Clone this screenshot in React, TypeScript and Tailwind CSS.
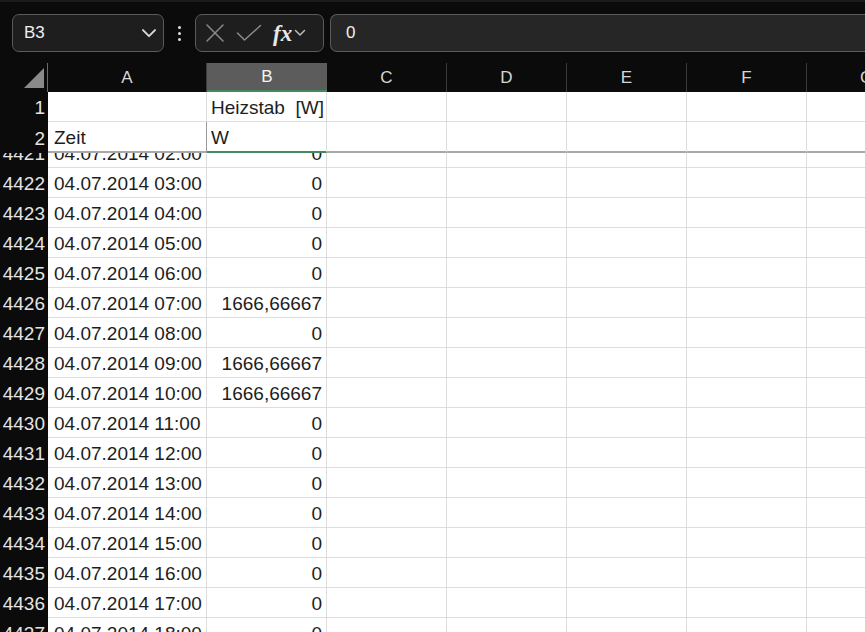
import React from 'react';

const COLS = ['A', 'B', 'C', 'D', 'E', 'F', 'G'];
const WIDTHS = ['w-[159px]', 'w-[120px]', 'w-[120px]', 'w-[120px]', 'w-[120px]', 'w-[120px]', 'w-[120px]'];

const FONT = { fontFamily: '"Liberation Sans", Arial, sans-serif' };

const rows: { n: number; time: string; val: string }[] = [
    { n: 4421, time: '04.07.2014 02:00', val: '0' },
    { n: 4422, time: '04.07.2014 03:00', val: '0' },
    { n: 4423, time: '04.07.2014 04:00', val: '0' },
    { n: 4424, time: '04.07.2014 05:00', val: '0' },
    { n: 4425, time: '04.07.2014 06:00', val: '0' },
    { n: 4426, time: '04.07.2014 07:00', val: '1666,66667' },
    { n: 4427, time: '04.07.2014 08:00', val: '0' },
    { n: 4428, time: '04.07.2014 09:00', val: '1666,66667' },
    { n: 4429, time: '04.07.2014 10:00', val: '1666,66667' },
    { n: 4430, time: '04.07.2014 11:00', val: '0' },
    { n: 4431, time: '04.07.2014 12:00', val: '0' },
    { n: 4432, time: '04.07.2014 13:00', val: '0' },
    { n: 4433, time: '04.07.2014 14:00', val: '0' },
    { n: 4434, time: '04.07.2014 15:00', val: '0' },
    { n: 4435, time: '04.07.2014 16:00', val: '0' },
    { n: 4436, time: '04.07.2014 17:00', val: '0' },
    { n: 4437, time: '04.07.2014 18:00', val: '0' },
];

const Chevron = ({ className }: { className?: string }) => (
    <svg viewBox="0 0 12 8" className={className} fill="none" stroke="currentColor" strokeWidth="1.5" strokeLinecap="round" strokeLinejoin="round">
        <polyline points="1.5 1.5 6 6 10.5 1.5" />
    </svg>
);

const RowHeader = ({ label }: { label: string | number }) => (
    <div className="w-[48px] shrink-0 h-full bg-[#0b0b0b] text-[#e4e4e4] text-[19px] text-right pr-[3px] flex items-center justify-end pt-[3px]">
        {label}
    </div>
);

interface CellsProps {
    a?: string;
    b?: string;
    bRight?: boolean;
    bottom?: string;
    bBottom?: string;
}

const Cells = ({ a, b, bRight, bottom = 'border-b border-[#dedede]', bBottom }: CellsProps) => (
    <>
        <div className={`${WIDTHS[0]} shrink-0 h-full bg-white border-r border-[#9a9a9a] ${bottom} flex items-center pt-[3px] pl-[6px] text-[19px] text-[#1e1e1e] whitespace-nowrap overflow-hidden`}>
            {a}
        </div>
        <div className={`${WIDTHS[1]} shrink-0 h-full bg-white border-r border-[#dedede] ${bBottom ?? bottom} flex items-center pt-[3px] text-[19px] text-[#1e1e1e] whitespace-pre overflow-hidden ${bRight ? 'justify-end pr-[4px]' : 'pl-[4px]'}`}>
            {b}
        </div>
        {WIDTHS.slice(2).map((w, i) => (
            <div key={i} className={`${w} shrink-0 h-full bg-white border-r border-[#dedede] ${bottom}`} />
        ))}
    </>
);

export default function App() {
    return (
        <div className="w-[865px] h-[632px] overflow-hidden bg-[#0b0b0b] flex flex-col" style={FONT}>
            {/* top strip */}
            <div className="h-[13px] shrink-0 bg-[#0b0b0b] border-t-[2px] border-[#1c1c1c]" />

            {/* formula bar */}
            <div className="h-[40px] shrink-0 flex items-center pl-[12px]">
                <div className="w-[152px] h-[38px] rounded-[7px] border border-[#5a5a5a] bg-[#1e1e1e] flex items-center justify-between pl-[11px] pr-[6px]">
                    <span className="text-[17px] text-[#f0f0f0]">B3</span>
                    <Chevron className="w-[16px] h-[11px] text-[#d8d8d8]" />
                </div>
                <div className="w-[31px] flex flex-col items-center gap-[3px]">
                    <span className="w-[3px] h-[3px] rounded-full bg-[#e0e0e0]" />
                    <span className="w-[3px] h-[3px] rounded-full bg-[#e0e0e0]" />
                    <span className="w-[3px] h-[3px] rounded-full bg-[#e0e0e0]" />
                </div>
                <div className="w-[129px] h-[38px] rounded-[7px] border border-[#5a5a5a] bg-[#1e1e1e] flex items-center pl-[9px] pr-[4px] gap-[11px]">
                    <svg viewBox="0 0 20 20" className="w-[20px] h-[20px] text-[#8a8a8a]" fill="none" stroke="currentColor" strokeWidth="1.5" strokeLinecap="round">
                        <line x1="2" y1="2" x2="18" y2="18" />
                        <line x1="18" y1="2" x2="2" y2="18" />
                    </svg>
                    <svg viewBox="0 0 26 18" className="w-[26px] h-[18px] text-[#8a8a8a]" fill="none" stroke="currentColor" strokeWidth="1.5" strokeLinecap="round" strokeLinejoin="round">
                        <polyline points="1.5 9 8.5 16 24.5 1.5" />
                    </svg>
                    <div className="flex items-center gap-[2px]">
                        <span className="text-[23px] italic font-bold text-[#e8e8e8] leading-none" style={{ fontFamily: '"Liberation Serif", "Times New Roman", serif' }}>fx</span>
                        <Chevron className="w-[12px] h-[8px] text-[#bcbcbc]" />
                    </div>
                </div>
                <div className="ml-[6px] flex-1 h-[38px] rounded-l-[7px] border border-r-0 border-[#5a5a5a] bg-[#262626] flex items-center pl-[15px]">
                    <span className="text-[17px] text-[#f0f0f0]">0</span>
                </div>
            </div>

            <div className="h-[10px] shrink-0" />

            {/* column headers */}
            <div className="h-[29px] shrink-0 flex">
                <div className="w-[48px] shrink-0 h-full border-r border-[#6a6a6a] flex items-end justify-end pr-[3px] pb-[4px]">
                    <svg viewBox="0 0 20 20" className="w-[20px] h-[20px]">
                        <polygon points="20 0 20 20 0 20" fill="#8a8a8a" />
                    </svg>
                </div>
                {COLS.map((c, i) => (
                    <div
                        key={c}
                        className={`${WIDTHS[i]} shrink-0 h-full flex items-center justify-center text-[17px] ${
                            c === 'B'
                                ? 'bg-[#5c5c5c] text-[#f4f4f4] border-b-[2px] border-[#3f8a5f]'
                                : 'bg-[#0b0b0b] text-[#d6d6d6] border-r border-[#3a3a3a]'
                        }`}
                    >
                        {c}
                    </div>
                ))}
            </div>

            {/* frozen rows */}
            <div className="h-[30px] shrink-0 flex">
                <RowHeader label={1} />
                <Cells b="Heizstab  [W]" />
            </div>
            <div className="h-[31px] shrink-0 flex">
                <RowHeader label={2} />
                <Cells a="Zeit" b="W" bottom="border-b-[2px] border-b-[#a8a8a8]" bBottom="border-b-[2px] border-b-[#3f8a5f]" />
            </div>

            {/* scrolled rows */}
            <div className="flex-1 overflow-hidden">
                <div className="-mt-[15px]">
                    {rows.map(r => (
                        <div key={r.n} className="h-[30px] flex">
                            <RowHeader label={r.n} />
                            <Cells a={r.time} b={r.val} bRight />
                        </div>
                    ))}
                </div>
            </div>
        </div>
    );
}
